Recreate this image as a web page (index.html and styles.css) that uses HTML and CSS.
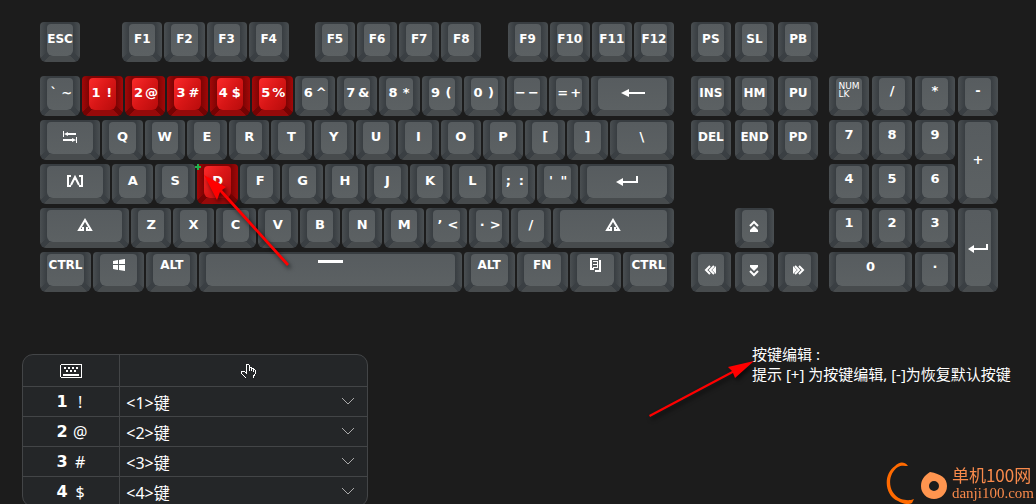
FILE: index.html
```
<!DOCTYPE html>
<html lang="zh-CN">
<head>
    <meta charset="UTF-8">
    <meta name="viewport" content="width=device-width, initial-scale=1.0">
    <title>按键编辑</title>
    <link rel="stylesheet" href="styles.css">
</head>
<body>
    <main class="keyboard">
        <section class="block main-block">
            <div class="row top-row">
                <button class="key"><span class="cap">ESC</span></button>
                <div class="space-esc"></div>
                <button class="key"><span class="cap">F1</span></button>
                <button class="key"><span class="cap">F2</span></button>
                <button class="key"><span class="cap">F3</span></button>
                <button class="key"><span class="cap">F4</span></button>
                <div class="space-f"></div>
                <button class="key"><span class="cap">F5</span></button>
                <button class="key"><span class="cap">F6</span></button>
                <button class="key"><span class="cap">F7</span></button>
                <button class="key"><span class="cap">F8</span></button>
                <div class="space-f"></div>
                <button class="key"><span class="cap">F9</span></button>
                <button class="key"><span class="cap">F10</span></button>
                <button class="key"><span class="cap">F11</span></button>
                <button class="key"><span class="cap">F12</span></button>
            </div>
            <div class="row">
                <button class="key"><span class="cap pair"><span>`</span><span>~</span></span></button>
                <button class="key red"><span class="cap pair"><span>1</span><span>!</span></span></button>
                <button class="key red"><span class="cap pair"><span>2</span><span>@</span></span></button>
                <button class="key red"><span class="cap pair"><span>3</span><span>#</span></span></button>
                <button class="key red"><span class="cap pair"><span>4</span><span>$</span></span></button>
                <button class="key red"><span class="cap pair"><span>5</span><span>%</span></span></button>
                <button class="key"><span class="cap pair"><span>6</span><span>^</span></span></button>
                <button class="key"><span class="cap pair"><span>7</span><span>&amp;</span></span></button>
                <button class="key"><span class="cap pair"><span>8</span><span>*</span></span></button>
                <button class="key"><span class="cap pair"><span>9</span><span>(</span></span></button>
                <button class="key"><span class="cap pair"><span>0</span><span>)</span></span></button>
                <button class="key"><span class="cap pair"><span>−</span><span>−</span></span></button>
                <button class="key"><span class="cap pair"><span>=</span><span>+</span></span></button>
                <button class="key backspace" aria-label="Backspace"><span class="cap">
                    <svg width="24" height="8" viewBox="0 0 24 8"><path d="M0 4L8 0V3H24V5H8V8Z"/></svg>
                </span></button>
            </div>
            <div class="row">
                <button class="key tab" aria-label="Tab"><span class="cap">
                    <svg width="14" height="12" viewBox="0 0 14 12"><path d="M0 0H1V6H0ZM1 3L5 1V2H13V4H5V5ZM13 6H14V12H13ZM13 9L9 7V8H0V10H9V11Z"/></svg>
                </span></button>
                <button class="key"><span class="cap">Q</span></button>
                <button class="key"><span class="cap">W</span></button>
                <button class="key"><span class="cap">E</span></button>
                <button class="key"><span class="cap">R</span></button>
                <button class="key"><span class="cap">T</span></button>
                <button class="key"><span class="cap">Y</span></button>
                <button class="key"><span class="cap">U</span></button>
                <button class="key"><span class="cap">I</span></button>
                <button class="key"><span class="cap">O</span></button>
                <button class="key"><span class="cap">P</span></button>
                <button class="key"><span class="cap">[</span></button>
                <button class="key"><span class="cap">]</span></button>
                <button class="key backslash"><span class="cap">\</span></button>
            </div>
            <div class="row">
                <button class="key caps" aria-label="Caps Lock"><span class="cap">
                    <svg class="line" width="16" height="12" viewBox="0 0 16 12"><path d="M4 1H1V11H4M12 1H15V11H12M4 10L8 2L12 10"/></svg>
                </span></button>
                <button class="key"><span class="cap">A</span></button>
                <button class="key"><span class="cap">S</span></button>
                <button class="key red selected">
                    <span class="cap">D</span>
                    <svg class="plus" width="6" height="6" viewBox="0 0 6 6"><path d="M2 0H4V2H6V4H4V6H2V4H0V2H2Z"/></svg>
                    <svg class="arrow arrow-key" width="90" height="96" viewBox="0 0 90 96"><path d="M2 3L24 15L20 18L87 92L85 94L18 20L15 28Z"/></svg>
                </button>
                <button class="key"><span class="cap">F</span></button>
                <button class="key"><span class="cap">G</span></button>
                <button class="key"><span class="cap">H</span></button>
                <button class="key"><span class="cap">J</span></button>
                <button class="key"><span class="cap">K</span></button>
                <button class="key"><span class="cap">L</span></button>
                <button class="key"><span class="cap pair"><span>;</span><span>:</span></span></button>
                <button class="key"><span class="cap pair"><span>'</span><span>"</span></span></button>
                <button class="key enter" aria-label="Enter"><span class="cap">
                    <svg width="22" height="10" viewBox="0 0 22 10"><path d="M0 6L7 2V5H20V0H22V7H7V10Z"/></svg>
                </span></button>
            </div>
            <div class="row">
                <button class="key shift-left" aria-label="Shift"><span class="cap">
                    <svg class="line" width="16" height="14" viewBox="0 0 16 14"><path d="M6 9V12H2L8 2L14 12H10V9"/></svg>
                </span></button>
                <button class="key"><span class="cap">Z</span></button>
                <button class="key"><span class="cap">X</span></button>
                <button class="key"><span class="cap">C</span></button>
                <button class="key"><span class="cap">V</span></button>
                <button class="key"><span class="cap">B</span></button>
                <button class="key"><span class="cap">N</span></button>
                <button class="key"><span class="cap">M</span></button>
                <button class="key"><span class="cap pair"><span>’</span><span>&lt;</span></span></button>
                <button class="key"><span class="cap pair"><span>·</span><span>&gt;</span></span></button>
                <button class="key"><span class="cap">/</span></button>
                <button class="key shift-right" aria-label="Shift"><span class="cap">
                    <svg class="line" width="16" height="14" viewBox="0 0 16 14"><path d="M6 9V12H2L8 2L14 12H10V9"/></svg>
                </span></button>
            </div>
            <div class="row bottom-row">
                <button class="key mod"><span class="cap">CTRL</span></button>
                <button class="key mod" aria-label="Windows"><span class="cap">
                    <svg width="12" height="12" viewBox="0 0 12 12"><path d="M0 2L5 1V5H0ZM6 1L12 0V5H6ZM0 6H5V11L0 10ZM6 6H12V12L6 11Z"/></svg>
                </span></button>
                <button class="key mod"><span class="cap">ALT</span></button>
                <button class="key space" aria-label="Space"><span class="cap">
                    <svg width="25" height="3" viewBox="0 0 25 3"><path d="M0 0H25V3H0Z"/></svg>
                </span></button>
                <button class="key mod"><span class="cap">ALT</span></button>
                <button class="key mod"><span class="cap">FN</span></button>
                <button class="key mod" aria-label="Menu"><span class="cap">
                    <svg width="11" height="14" viewBox="0 0 11 14"><path d="M0 0H8V2H2V10H4V12H0ZM3 3H7V4H3ZM3 6H7V7H3ZM3 9H7V10H3ZM9 2H11V14H5V12H9ZM7 3H8V10H7Z"/></svg>
                </span></button>
                <button class="key mod"><span class="cap">CTRL</span></button>
            </div>
        </section>

        <section class="block nav-block">
            <div class="nav-grid top-row">
                <button class="key"><span class="cap">PS</span></button>
                <button class="key"><span class="cap">SL</span></button>
                <button class="key"><span class="cap">PB</span></button>
            </div>
            <div class="nav-grid">
                <button class="key"><span class="cap">INS</span></button>
                <button class="key"><span class="cap">HM</span></button>
                <button class="key"><span class="cap">PU</span></button>
                <button class="key"><span class="cap">DEL</span></button>
                <button class="key"><span class="cap">END</span></button>
                <button class="key"><span class="cap">PD</span></button>
                <button class="key up" aria-label="Up"><span class="cap">
                    <svg width="10" height="13" viewBox="0 0 10 13"><path class="stroke" d="M1 6L5 2L9 6"/><path d="M5 6L9 10V12H1V10Z"/></svg>
                </span></button>
                <button class="key left" aria-label="Left"><span class="cap">
                    <svg width="13" height="10" viewBox="0 0 13 10"><path class="stroke" d="M6 1L2 5L6 9M10 1L6 5L10 9"/><path d="M8 5L12 1V9Z"/></svg>
                </span></button>
                <button class="key down" aria-label="Down"><span class="cap">
                    <svg width="10" height="13" viewBox="0 0 10 13"><path class="stroke" d="M1 7L5 11L9 7"/><path d="M5 7L9 3V1H1V3Z"/></svg>
                </span></button>
                <button class="key right" aria-label="Right"><span class="cap">
                    <svg width="13" height="10" viewBox="0 0 13 10"><path class="stroke" d="M7 1L11 5L7 9M3 1L7 5L3 9"/><path d="M5 5L1 1V9Z"/></svg>
                </span></button>
            </div>
        </section>

        <section class="block num-block">
            <div class="num-grid">
                <button class="key"><span class="cap numlock">NUM<br>LK</span></button>
                <button class="key"><span class="cap">/</span></button>
                <button class="key"><span class="cap">*</span></button>
                <button class="key"><span class="cap">-</span></button>
                <button class="key"><span class="cap">7</span></button>
                <button class="key"><span class="cap">8</span></button>
                <button class="key"><span class="cap">9</span></button>
                <button class="key tall"><span class="cap">+</span></button>
                <button class="key"><span class="cap">4</span></button>
                <button class="key"><span class="cap">5</span></button>
                <button class="key"><span class="cap">6</span></button>
                <button class="key"><span class="cap">1</span></button>
                <button class="key"><span class="cap">2</span></button>
                <button class="key"><span class="cap">3</span></button>
                <button class="key tall" aria-label="Enter"><span class="cap">
                    <svg width="20" height="9" viewBox="0 0 20 9"><path d="M0 5L6 1V4H18V0H20V6H6V9Z"/></svg>
                </span></button>
                <button class="key wide"><span class="cap">0</span></button>
                <button class="key"><span class="cap">·</span></button>
            </div>
        </section>
    </main>

    <div class="editor">
        <table class="key-table">
            <thead>
                <tr>
                    <th aria-label="按键">
                        <svg class="icon" width="22" height="14" viewBox="0 0 22 14"><path fill-rule="evenodd" d="M1 0H21L22 1V13L21 14H1L0 13V1ZM1 1V13H21V1Z"/><path d="M4 3H6V5H4ZM8 3H10V5H8ZM12 3H14V5H12ZM16 3H18V5H16ZM6 6H8V8H6ZM10 6H12V8H10ZM14 6H16V8H14ZM3 10H19V12H3Z"/></svg>
                    </th>
                    <th aria-label="功能">
                        <svg class="icon hand" width="16" height="16" viewBox="0 0 16 16"><path d="M5 15V14L1 10V8H4L6 10V2L7 1H8L9 2V8V4H11V8V5H13V9V6H14L15 7V11L13 14V15"/></svg>
                    </th>
                </tr>
            </thead>
            <tbody>
                <tr>
                    <td><span class="sym"><b>1</b><span>!</span></span></td>
                    <td><select aria-label="1 !"><option>&lt;1&gt;键</option></select></td>
                </tr>
                <tr>
                    <td><span class="sym"><b>2</b><span>@</span></span></td>
                    <td><select aria-label="2 @"><option>&lt;2&gt;键</option></select></td>
                </tr>
                <tr>
                    <td><span class="sym"><b>3</b><span>#</span></span></td>
                    <td><select aria-label="3 #"><option>&lt;3&gt;键</option></select></td>
                </tr>
                <tr>
                    <td><span class="sym"><b>4</b><span>$</span></span></td>
                    <td><select aria-label="4 $"><option>&lt;4&gt;键</option></select></td>
                </tr>
            </tbody>
        </table>

        <div class="tips">
            <p>按键编辑 :</p>
            <p>提示 [+] 为按键编辑, [-]为恢复默认按键</p>
            <svg class="arrow arrow-tips" width="108" height="60" viewBox="0 0 108 60"><path d="M106 2L80 8L84 12L1 56L2 58L85 14L87 19Z"/></svg>
        </div>
    </div>

    <div class="watermark">
        <svg width="62" height="42" viewBox="0 0 62 42">
            <path fill="#ff6a00" d="M22 4C18 -1 13 0 9 4C-3 12 -2 33 12 39C17 42 22 43 26 41L28 37C23 39 19 38 15 37C1 31 1 12 12 5C15 3 19 4 22 4Z"/>
            <path fill="#ff954f" fill-rule="evenodd" d="M44 10C55 12 61 16 61 24A13 13 0 1 1 35 24C35 18 38 14 44 10ZM48 19A5 5 0 1 0 48 29A5 5 0 1 0 48 19Z"/>
        </svg>
        <div class="watermark-text">
            <span class="site-name">单机100网</span>
            <span class="site-url">danji100.com</span>
        </div>
    </div>
</body>
</html>
```
FILE: styles.css
```
* {
    box-sizing: border-box;
}

body {
    margin: 0;
    min-height: 100vh;
    overflow: hidden;
    background: #1c1c1c;
    color: #fff;
    font-family: "Noto Sans", "Noto Sans CJK SC", sans-serif;
    font-size: 15px;
}

.keyboard {
    display: flex;
    align-items: flex-end;
    padding: 22px 38px 0 40px;
}

.block {
    display: flex;
    flex-direction: column;
    gap: 4px;
}

.main-block {
    flex: 634;
}

.nav-block {
    flex: 127;
    margin: 0 11px 0 17px;
}

.num-block {
    flex: 169;
}

.row {
    display: flex;
    gap: 2px;
    height: 40px;
}

.top-row {
    margin-bottom: 10px;
}

.nav-grid,
.num-grid {
    display: grid;
    grid-auto-rows: 40px;
}

.nav-grid {
    grid-template-columns: repeat(3, 1fr);
    gap: 4px;
}

.num-grid {
    grid-template-columns: repeat(4, 1fr);
    gap: 4px 3px;
}

/* keys */
.key {
    --edge: #4a4f52;
    --side: #383d41;
    --base: #474b4d;
    --corner: #3a3f43;
    flex: 1 1 40px;
    min-width: 0;
    display: flex;
    padding: 2px 7px 6px;
    border: none;
    border-radius: 4px 4px 6px 6px;
    color: #fff;
    font-family: "DejaVu Sans", sans-serif;
    font-size: 13px;
    font-weight: bold;
    line-height: 14px;
    cursor: pointer;
    background:
        linear-gradient(135deg, transparent 32%, var(--corner) 32% 66%, transparent 66%) left bottom / 11px 11px no-repeat,
        linear-gradient(45deg, transparent 32%, var(--corner) 32% 66%, transparent 66%) right bottom / 11px 11px no-repeat,
        linear-gradient(to top, var(--base) 6px, transparent 6px),
        linear-gradient(90deg, var(--edge), var(--side) 7px, var(--side) calc(100% - 7px), var(--edge));
}

.cap {
    flex: 1;
    min-width: 0;
    display: flex;
    justify-content: center;
    align-items: center;
    padding-bottom: 2px;
    border-radius: 4px 4px 6px 6px;
    background: linear-gradient(#575c5f, #5c6163);
    white-space: nowrap;
}

.pair {
    display: grid;
    grid-template-columns: 13px 13px;
    justify-items: center;
}

.red {
    --edge: #a30808;
    --side: #7d0404;
    --base: #960a0a;
    --corner: #740303;
}

.red .cap {
    background: linear-gradient(125deg, #fb2a2a, #d81616 50%, #b80c0c);
}

.key svg {
    fill: #fff;
    flex: none;
}

.key .line,
.key .stroke {
    fill: none;
    stroke: #fff;
    stroke-width: 2;
}

.space-esc {
    flex: 1 1 38px;
}

.space-f {
    flex: 1 1 22px;
}

.backspace {
    flex-basis: 82px;
}

.tab {
    flex-basis: 60px;
}

.backslash {
    flex-basis: 64px;
}

.caps {
    flex-basis: 70px;
}

.enter {
    flex-basis: 94px;
}

.shift-left {
    flex-basis: 89px;
}

.shift-right {
    flex-basis: 121px;
}

.mod {
    flex-basis: 51px;
}

.space {
    flex-basis: 262px;
}

.top-row .key,
.bottom-row .key,
.nav-grid .key {
    font-size: 12px;
}

.bottom-row .cap {
    padding-bottom: 10px;
}

.space .cap {
    padding-bottom: 18px;
}

.up {
    grid-area: 4 / 2;
}

.left {
    grid-area: 5 / 1;
}

.down {
    grid-area: 5 / 2;
}

.right {
    grid-area: 5 / 3;
}

.up .cap,
.left .cap,
.down .cap,
.right .cap {
    padding-bottom: 0;
}

.num-grid .cap {
    padding-bottom: 6px;
}

.num-grid .numlock {
    padding-bottom: 8px;
    font-size: 9px;
    font-weight: normal;
    line-height: 8px;
    text-align: left;
}

.tall {
    grid-column: 4;
    grid-row: span 2;
}

.num-grid .tall .cap {
    padding-bottom: 0;
}

.wide {
    grid-column: span 2;
}

/* selected key */
.selected {
    position: relative;
    z-index: 1;
}

.selected .plus {
    position: absolute;
    top: 0;
    left: -2px;
    fill: #22b14c;
}

.arrow {
    position: absolute;
    pointer-events: none;
    filter: drop-shadow(2px 3px 2px rgba(0, 0, 0, 0.6));
}

.arrow,
.key .arrow {
    fill: #f00;
}

.arrow-key {
    top: 8px;
    left: 5px;
}

/* key list and tips */
.editor {
    display: flex;
    justify-content: space-between;
    align-items: flex-start;
    padding: 52px 20px 0 22px;
}

.key-table {
    flex: 0 1 346px;
    margin-top: 10px;
    border: 1px solid #434547;
    border-radius: 11px;
    border-spacing: 0;
    background: #242628;
    table-layout: fixed;
}

.key-table th {
    height: 31px;
    padding: 0;
}

.key-table th:first-child {
    width: 28%;
}

.key-table th + th {
    padding-left: 8px;
}

.key-table td {
    height: 30px;
    padding: 0;
    border-top: 1px solid #434547;
}

.key-table th + th,
.key-table td + td {
    border-left: 1px solid #434547;
}

.icon {
    display: block;
    margin: 0 auto;
    fill: #fff;
    shape-rendering: crispEdges;
}

.hand {
    fill: none;
    stroke: #fff;
}

.sym {
    display: grid;
    grid-template-columns: 18px 18px;
    justify-content: center;
    justify-items: center;
    align-items: center;
    font-size: 16px;
    line-height: 20px;
}

.sym b {
    font-family: "DejaVu Sans", sans-serif;
}

select {
    display: block;
    width: 100%;
    height: 29px;
    padding: 2px 30px 0 6px;
    border: none;
    appearance: none;
    color: #fff;
    font: 16px "Noto Sans", "Noto Sans CJK SC", sans-serif;
    background: url("data:image/svg+xml,%3Csvg xmlns='http://www.w3.org/2000/svg' width='12' height='7'%3E%3Cpath d='M0 0L6 6L12 0' fill='none' stroke='%23aaa'/%3E%3C/svg%3E") right 13px center no-repeat;
}

.tips {
    position: relative;
    flex: 0 0 264px;
    line-height: 20px;
    white-space: nowrap;
}

.tips p {
    margin: 0;
}

.arrow-tips {
    top: 15px;
    left: -104px;
}

.watermark {
    position: fixed;
    right: 2px;
    bottom: 0;
    display: flex;
    gap: 4px;
    color: #f98a4b;
}

.watermark-text {
    display: flex;
    flex-direction: column;
    padding-top: 4px;
}

.site-name {
    font-family: "Noto Sans CJK SC", sans-serif;
    font-size: 17px;
    line-height: 18px;
}

.site-url {
    font-family: "Liberation Serif", serif;
    font-size: 15px;
    line-height: 18px;
}
```
